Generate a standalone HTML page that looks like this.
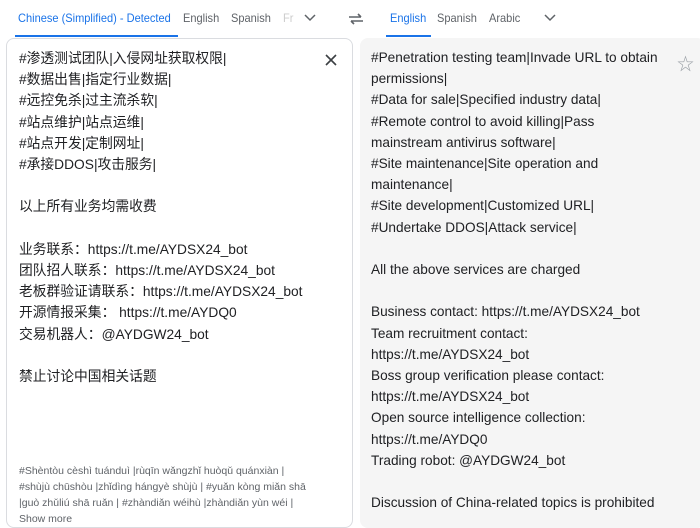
<!DOCTYPE html>
<html><head><meta charset="utf-8"><style>
*{margin:0;padding:0;box-sizing:border-box}
body{width:700px;height:518px;overflow:hidden;background:#fff;font-family:"Liberation Sans","Noto Sans CJK SC",sans-serif;color:#202124;position:relative}
.tab{position:absolute;top:11px;font-size:12px;color:#5f6368;white-space:nowrap;transform:scaleX(0.92);transform-origin:left}
.act{color:#1a73e8}
.ul{position:absolute;top:35px;height:2px;background:#1a73e8}
.left{position:absolute;left:6px;top:38px;width:347px;height:490px;border:1px solid #dadce0;border-radius:8px;background:#fff}
.right{position:absolute;left:360px;top:38px;width:345px;height:490px;background:#f5f5f5;border-radius:8px}
.txt{position:absolute;font-size:14px;line-height:21.2px;white-space:pre;transform-origin:left top}
.rom{position:absolute;left:19px;top:463px;font-size:10.5px;line-height:16px;color:#5f6368;white-space:pre}
</style></head><body>
<div class="tab act" style="left:18px">Chinese (Simplified) - Detected</div>
<div class="tab" style="left:183px">English</div>
<div class="tab" style="left:231px">Spanish</div>
<div class="tab" style="left:283px;color:#ccc">Fr</div>
<svg style="position:absolute;left:304px;top:14px" width="12" height="8"><path d="M1 1l5 5 5-5" stroke="#5f6368" stroke-width="1.5" fill="none"/></svg>
<svg style="position:absolute;left:348px;top:13px" width="16" height="12"><path d="M1 4h12M10 1l3 3M15 8H3M6 11l-3-3" stroke="#5f6368" stroke-width="1.6" fill="none"/></svg>
<div class="tab act" style="left:390px">English</div>
<div class="tab" style="left:437px">Spanish</div>
<div class="tab" style="left:489px">Arabic</div>
<svg style="position:absolute;left:544px;top:14px" width="12" height="8"><path d="M1 1l5 5 5-5" stroke="#5f6368" stroke-width="1.5" fill="none"/></svg>
<div class="ul" style="left:15px;width:163px"></div>
<div class="ul" style="left:386px;width:45px"></div>
<div class="left"></div>
<div class="right"></div>
<svg style="position:absolute;left:325px;top:54px" width="12" height="12"><path d="M1 1l10 10M11 1L1 11" stroke="#3c4043" stroke-width="1.6"/></svg>
<div style="position:absolute;left:677px;top:50px;font-size:17px;color:#9aa0a6">☆</div>
<div class="txt" style="left:19px;top:48px;transform:scaleX(0.983)">#渗透测试团队|入侵网址获取权限|
#数据出售|指定行业数据|
#远控免杀|过主流杀软|
#站点维护|站点运维|
#站点开发|定制网址|
#承接DDOS|攻击服务|

以上所有业务均需收费

业务联系：https://t.me/AYDSX24_bot
团队招人联系：https://t.me/AYDSX24_bot
老板群验证请联系：https://t.me/AYDSX24_bot
开源情报采集： https://t.me/AYDQ0
交易机器人：@AYDGW24_bot

禁止讨论中国相关话题</div>
<div class="txt" style="left:371px;top:47px;transform:scaleX(0.974)">#Penetration testing team|Invade URL to obtain
permissions|
#Data for sale|Specified industry data|
#Remote control to avoid killing|Pass
mainstream antivirus software|
#Site maintenance|Site operation and
maintenance|
#Site development|Customized URL|
#Undertake DDOS|Attack service|

All the above services are charged

Business contact: https://t.me/AYDSX24_bot
Team recruitment contact:
https://t.me/AYDSX24_bot
Boss group verification please contact:
https://t.me/AYDSX24_bot
Open source intelligence collection:
https://t.me/AYDQ0
Trading robot: @AYDGW24_bot

Discussion of China-related topics is prohibited</div>
<div class="rom">#Shèntòu cèshì tuánduì |rùqīn wǎngzhǐ huòqǔ quánxiàn |
#shùjù chūshòu |zhǐdìng hángyè shùjù | #yuǎn kòng miǎn shā
|guò zhǔliú shā ruǎn | #zhàndiǎn wéihù |zhàndiǎn yùn wéi |
Show more</div>
</body></html>
